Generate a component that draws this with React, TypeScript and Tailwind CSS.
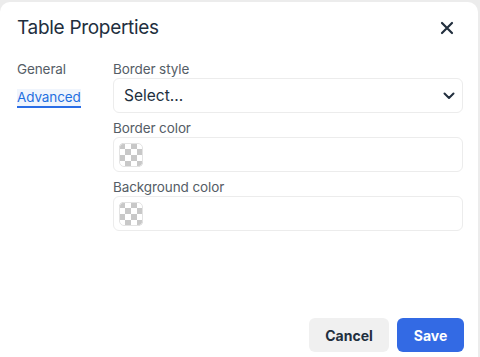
import React from "react";

const Swatch = () => (
  <svg width="24" height="24" viewBox="0 0 24 24" className="shrink-0">
    <defs>
      <clipPath id="sw">
        <rect x="0" y="0" width="24" height="24" rx="5" />
      </clipPath>
    </defs>
    <g clipPath="url(#sw)">
      <rect width="24" height="24" fill="#ffffff" />
      {[0, 1, 2, 3].map((r) =>
        [0, 1, 2, 3].map((c) =>
          (r + c) % 2 === 0 ? (
            <rect key={`${r}-${c}`} x={c * 6} y={r * 6} width="6" height="6" fill="#c8c8c8" />
          ) : null
        )
      )}
    </g>
    <rect x="0.5" y="0.5" width="23" height="23" rx="4.5" fill="none" stroke="#e3e3e3" />
  </svg>
);

export default function App() {
  const fields = ["Border color", "Background color"];

  return (
    <div className="w-[480px] h-[357px] overflow-hidden bg-[#ececec] pt-[2px] font-['Inter',sans-serif]">
      <div className="w-[478px] h-[360px] bg-white rounded-t-[10px] flex flex-col">
        {/* Header */}
        <div className="h-[52px] flex items-center justify-between pl-[17px] pr-[24px]">
          <h1 className="text-[19px] text-[#222f3e] tracking-[-0.3px]">Table Properties</h1>
          <svg width="14" height="14" viewBox="0 0 14 14">
            <path d="M2 2 L12 12 M12 2 L2 12" stroke="#222f3e" strokeWidth="2.2" strokeLinecap="round" />
          </svg>
        </div>

        {/* Body */}
        <div className="flex pl-[17px] pr-[15px] pt-[6px]">
          <div className="w-[96px] flex flex-col gap-[9px] pt-[1px]">
            <span className="text-[13.5px] leading-[17px] text-[#555d66] border-b-2 border-transparent self-start tracking-[-0.1px]">
              General
            </span>
            <span className="text-[13.5px] leading-[17px] text-[#1f6fe0] border-b-2 border-[#2a6de6] bg-[#f0f5fd] self-start tracking-[-0.1px]">
              Advanced
            </span>
          </div>

          <div className="flex-1 flex flex-col gap-[6px]">
            <div className="flex flex-col">
              <label className="text-[13.5px] leading-[18px] text-[#555d66] tracking-[-0.1px]">Border style</label>
              <div className="h-[35px] border border-[#ececec] rounded-[6px] flex items-center justify-between pl-[10px] pr-[7px]">
                <span className="text-[15.5px] text-[#222f3e]">Select...</span>
                <svg width="12" height="8" viewBox="0 0 12 8">
                  <path d="M1.5 1.5 L6 6 L10.5 1.5" stroke="#222f3e" strokeWidth="2" fill="none" strokeLinecap="round" strokeLinejoin="round" />
                </svg>
              </div>
            </div>
            {fields.map((f) => (
              <div key={f} className="flex flex-col">
                <label className="text-[13.5px] leading-[18px] text-[#555d66] tracking-[-0.1px]">{f}</label>
                <div className="h-[35px] border border-[#ececec] rounded-[6px] flex items-center pl-[5px]">
                  <Swatch />
                </div>
              </div>
            ))}
          </div>
        </div>

        {/* Footer */}
        <div className="mt-[87px] flex justify-end gap-[8px] pr-[14px]">
          <button className="h-[34px] w-[80px] rounded-[6px] bg-[#f0f0f0] text-[14px] font-bold text-[#222f3e]">
            Cancel
          </button>
          <button className="h-[34px] w-[67px] rounded-[6px] bg-[#336ae4] text-[14px] font-bold text-white">
            Save
          </button>
        </div>
      </div>
    </div>
  );
}
